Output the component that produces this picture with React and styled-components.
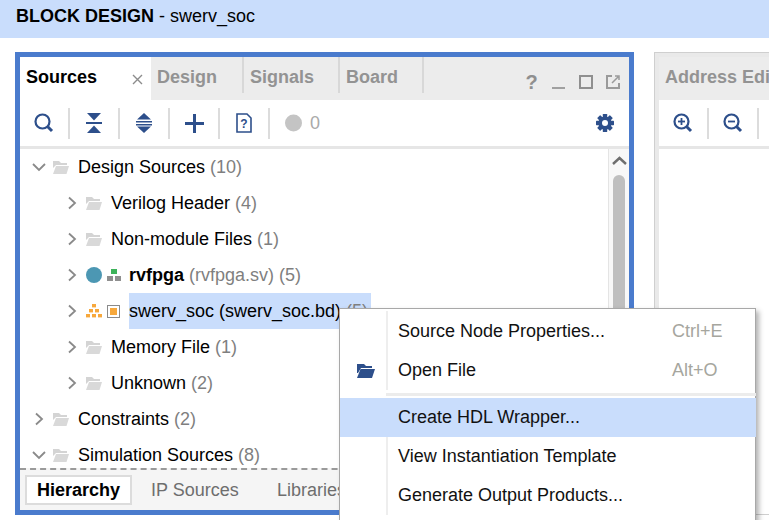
import styled, { createGlobalStyle } from "styled-components";

const GlobalStyle = createGlobalStyle`
    html, body {
        margin: 0;
        padding: 0;
        background: #fff;
    }

    body {
        font-family: "Liberation Sans", Arial, sans-serif;
        font-size: 18px;
        color: #000;
    }
`

const navy = "#2d4f8b";

const Page = styled.div`
    position: relative;
    width: 769px;
    height: 520px;
    overflow: hidden;
    background: #fff;
`

const TitleBar = styled.div`
    height: 38px;
    background: #c9ddfc;
    padding: 0 16px;
    line-height: 33px;
    box-sizing: border-box;

    b {
        font-weight: bold;
    }
`

const Workspace = styled.div`
    display: flex;
    gap: 20px;
    padding: 14px 0 0 15px;
`

const Panel = styled.div`
    flex: none;
    width: 619px;
    height: 463px;
    box-sizing: border-box;
    border: 5px solid #4a7bcd;
    display: flex;
    flex-direction: column;
`

const SidePanel = styled.div`
    flex: 1;
    min-width: 0;
    height: 463px;
    box-sizing: border-box;
    border: 1px solid #cfcfcf;
    border-right: 0;
    padding: 4px 0 0 4px;
    background: #e9e9e9;
    display: flex;
    flex-direction: column;
    overflow: hidden;
`

const SideBody = styled.div`
    flex: 1;
    background: #fff;
`

const TabStrip = styled.div`
    flex: none;
    height: 43px;
    background: #ececec;
    display: flex;
    align-items: stretch;
`

const Tab = styled.div`
    flex: none;
    box-sizing: border-box;
    width: ${(p) => p.$w}px;
    padding: 10px 0 0 6px;
    font-weight: bold;
    line-height: 20px;
    color: ${(p) => (p.$active ? "#000" : "#939393")};
    background: ${(p) => (p.$active ? "#fff" : "transparent")};
    position: relative;
    white-space: nowrap;
    overflow: hidden;
    border-right: ${(p) => (p.$divider ? "2px solid #d8d8d8" : "0")};
    margin-bottom: ${(p) => (p.$divider ? "7px" : "0")};
`

const CloseMark = styled.svg`
    position: absolute;
    right: 8px;
    top: 17px;
`

const WindowIcons = styled.div`
    margin-left: auto;
    display: flex;
    align-items: center;
    padding: 7px 3px 0 0;
`

const WindowIcon = styled.span`
    width: 27px;
    height: 20px;
    display: flex;
    align-items: center;
    justify-content: center;
    color: #8f8f8f;
    font-weight: bold;
    font-size: 20px;
`

const Toolbar = styled.div`
    flex: none;
    height: 49px;
    box-sizing: border-box;
    border-bottom: 3px solid #e6e6e6;
    background: #fff;
    display: flex;
    align-items: center;
`

const ToolCell = styled.div`
    flex: none;
    width: 50px;
    height: 31px;
    box-sizing: border-box;
    border-right: ${(p) => (p.$last ? "0" : "2px solid #dcdcdc")};
    padding-left: ${(p) => (p.$last ? "15px" : "0")};
    display: flex;
    align-items: center;
    justify-content: ${(p) => (p.$last ? "flex-start" : "center")};
    gap: 8px;
    color: #a9a9a9;
    font-size: 18px;
`

const GearSlot = styled.div`
    margin-left: auto;
    margin-right: 15px;
    display: flex;
`

const TreeArea = styled.div`
    flex: 1;
    min-height: 0;
    display: flex;
    overflow: hidden;
`

const Tree = styled.div`
    flex: 1;
    min-width: 0;
    overflow: hidden;
`

const Row = styled.div`
    height: 36px;
    display: flex;
    align-items: center;
    padding-left: ${(p) => 12 + p.$level * 33}px;
    white-space: nowrap;
`

const Chevron = styled.svg`
    flex: none;
    width: 14px;
    height: 14px;
`

const IconSlot = styled.span`
    flex: none;
    display: flex;
    align-items: center;
    width: ${(p) => p.$w}px;
    margin-left: ${(p) => p.$ml ?? 0}px;
`

const Label = styled.span`
    height: 36px;
    line-height: 36px;
    flex: ${(p) => (p.$selected ? "none" : "0 1 auto")};
    width: ${(p) => (p.$selected ? "242px" : "auto")};
    box-sizing: border-box;
    background: ${(p) => (p.$selected ? "#c9ddfc" : "transparent")};
    font-weight: ${(p) => (p.$bold ? "bold" : "normal")};
`

const Muted = styled.span`
    color: #7f7f7f;
    font-weight: normal;
`

const Scrollbar = styled.div`
    flex: none;
    width: 21px;
    background: #f8f8f8;
    border-left: 1px solid #e4e4e4;
    box-sizing: border-box;
    display: flex;
    flex-direction: column;
    align-items: center;
`

const ScrollUp = styled.svg`
    flex: none;
    margin-top: 7px;
    margin-bottom: 10px;
`

const ScrollThumb = styled.div`
    width: 12px;
    height: 220px;
    border-radius: 6px 6px 0 0;
    background: #bfbfbf;
`

const BottomTabs = styled.div`
    flex: none;
    height: 42px;
    box-sizing: border-box;
    border-top: 2px dashed #9a9a9a;
    background: #f5f5f5;
    display: flex;
    align-items: center;
    padding-left: 5px;
    white-space: nowrap;
    overflow: hidden;
`

const SubTab = styled.div`
    flex: none;
    box-sizing: border-box;
    width: ${(p) => p.$w}px;
    height: 30px;
    padding-left: ${(p) => (p.$active ? "10px" : "19px")};
    font-weight: ${(p) => (p.$active ? "bold" : "normal")};
    color: ${(p) => (p.$active ? "#000" : "#6e6e6e")};
    background: ${(p) => (p.$active ? "#fff" : "transparent")};
    border: ${(p) => (p.$active ? "2px solid #dcdcdc" : "0")};
    line-height: ${(p) => (p.$active ? "26px" : "30px")};
`

const Menu = styled.div`
    position: absolute;
    left: 339px;
    top: 308px;
    width: 417px;
    height: 230px;
    box-sizing: border-box;
    background: #fff;
    border: 1px solid #a8a8a8;
    border-width: 1px 1px 0 1px;
    box-shadow: 3px 3px 5px rgba(0, 0, 0, 0.3);
    padding-top: 2px;
`

const MenuDivider = styled.div`
    height: 3px;
    margin: 4px -1px 2px 46px;
    background: #ececec;
`

const MenuItem = styled.div`
    height: 39px;
    display: grid;
    grid-template-columns: 46px 1fr 84px;
    align-items: stretch;
    background: ${(p) => (p.$hover ? "#c9ddfc" : "transparent")};
    margin: 0 -1px 0 0;
    line-height: 40px;

    ${MenuDivider} ~ & {
        line-height: 38px;
    }
`

const MenuIcon = styled.div`
    display: flex;
    align-items: center;
    justify-content: center;
    padding-left: 5px;
`

const MenuLabel = styled.div`
    border-left: ${(p) => (p.$hover ? "2px solid transparent" : "2px solid #eeeeee")};
    padding-left: 10px;
    color: #111;
`

const MenuKey = styled.div`
    color: #a6a69e;
`

const Folder = () => (
    <svg width="18" height="15" viewBox="0 0 18 15">
        <path d="M1 1h6l2 2h6v2H4L1 8z" fill="#d4d4d4" />
        <path d="M1 14L4 6h13l-2.5 8z" fill="#d9d9d9" />
    </svg>
);

const ChevronRight = () => (
    <Chevron viewBox="0 0 14 14">
        <path d="M4 1.5L10 7l-6 5.5" fill="none" stroke="#8a8a8a" strokeWidth="1.8" />
    </Chevron>
);

const ChevronDown = () => (
    <Chevron viewBox="0 0 14 14">
        <path d="M1 4l6 6 6-6" fill="none" stroke="#8a8a8a" strokeWidth="1.8" />
    </Chevron>
);

const SearchIcon = ({ sign }) => (
    <svg width="20" height="20" viewBox="0 0 20 20">
        <circle cx="8.5" cy="8.5" r="7" fill="none" stroke={navy} strokeWidth="2.2" />
        <path d="M13.5 13.5l4.5 4.5" stroke={navy} strokeWidth="3" />
        {sign && <path d="M5 8.5h7" stroke={navy} strokeWidth="1.8" />}
        {sign === "plus" && <path d="M8.5 5v7" stroke={navy} strokeWidth="1.8" />}
    </svg>
);

const CollapseIcon = () => (
    <svg width="16" height="20" viewBox="0 0 16 20">
        <path d="M1 0h14l-7 7.5z" fill={navy} />
        <path d="M0 9h16v2H0z" fill={navy} />
        <path d="M1 20h14l-7-7.5z" fill={navy} />
    </svg>
);

const ExpandIcon = () => (
    <svg width="16" height="20" viewBox="0 0 16 20">
        <path d="M8 0l7 6.5H1z" fill={navy} />
        <path d="M0 8h16v1.6H0zM0 11h16v1.6H0z" fill={navy} />
        <path d="M8 20l7-6.5H1z" fill={navy} />
    </svg>
);

const PlusIcon = () => (
    <svg width="19" height="19" viewBox="0 0 19 19">
        <path d="M8 0h3v8h8v3h-8v8H8v-8H0V8h8z" fill={navy} />
    </svg>
);

const DocIcon = () => (
    <svg width="16" height="20" viewBox="0 0 16 20">
        <path d="M1 1h10l4 4v14H1z" fill="#fff" stroke={navy} strokeWidth="1.6" />
        <text x="8" y="15" textAnchor="middle" fontSize="12" fontWeight="bold" fill={navy} fontFamily="Liberation Sans">?</text>
    </svg>
);

const GearIcon = () => (
    <svg width="18" height="18" viewBox="0 0 18 18">
        {[0, 45, 90, 135].map((r) => (
            <rect key={r} x="6.8" y="0" width="4.4" height="18" rx="0.6" fill={navy} transform={`rotate(${r} 9 9)`} />
        ))}
        <circle cx="9" cy="9" r="6.6" fill={navy} />
        <circle cx="9" cy="9" r="3" fill="#fff" />
    </svg>
);

const GrayDot = () => (
    <svg width="18" height="18" viewBox="0 0 18 18">
        <circle cx="9" cy="9" r="9" fill="#c4c4c4" />
    </svg>
);

const ModuleIcon = () => (
    <svg width="14" height="12" viewBox="0 0 14 12">
        <rect x="4" y="0" width="6" height="5" fill="#3db35a" />
        <rect x="0" y="7" width="6" height="5" fill="#8f8f8f" />
        <rect x="8" y="7" width="6" height="5" fill="#8f8f8f" />
    </svg>
);

const PyramidIcon = () => (
    <svg width="16" height="14" viewBox="0 0 16 14">
        <rect x="6" y="0" width="4" height="3.4" fill="#f7a83c" />
        <rect x="3" y="5" width="4" height="3.4" fill="#f7a83c" />
        <rect x="9" y="5" width="4" height="3.4" fill="#f7a83c" />
        <rect x="0" y="10" width="4" height="3.4" fill="#f7a83c" />
        <rect x="6" y="10" width="4" height="3.4" fill="#f7a83c" />
        <rect x="12" y="10" width="4" height="3.4" fill="#f7a83c" />
    </svg>
);

const BlockIcon = () => (
    <svg width="13" height="13" viewBox="0 0 13 13">
        <rect x="0.5" y="0.5" width="12" height="12" fill="#fff" stroke="#8a8a8a" />
        <rect x="3" y="3" width="7" height="7" fill="#f7a83c" />
    </svg>
);

const TreeRow = ({ level = 0, open, icons, children, selected, bold }) => (
    <Row $level={level}>
        {open ? <ChevronDown /> : <ChevronRight />}
        {icons || (
            <IconSlot $w={26} $ml={6}>
                <Folder />
            </IconSlot>
        )}
        <Label $selected={selected} $bold={bold}>
            {children}
        </Label>
    </Row>
);

const App = () => {
    return (
        <Page>
            <GlobalStyle />
            <TitleBar>
                <b>BLOCK DESIGN</b> - swerv_soc
            </TitleBar>
            <Workspace>
                <Panel>
                    <TabStrip>
                        <Tab $active $w={131}>
                            Sources
                            <CloseMark width="11" height="11" viewBox="0 0 11 11">
                                <path d="M1 1l9 9M10 1l-9 9" stroke="#8c8c8c" strokeWidth="1.4" />
                            </CloseMark>
                        </Tab>
                        <Tab $w={93} $divider>Design</Tab>
                        <Tab $w={96} $divider>Signals</Tab>
                        <Tab $w={84} $divider>Board</Tab>
                        <WindowIcons>
                            <WindowIcon>?</WindowIcon>
                            <WindowIcon>
                                <svg width="14" height="14" viewBox="0 0 14 14">
                                    <path d="M0 12h13v2H0z" fill="#a0a0a0" />
                                </svg>
                            </WindowIcon>
                            <WindowIcon>
                                <svg width="14" height="14" viewBox="0 0 14 14">
                                    <rect x="1" y="1" width="12" height="12" fill="none" stroke="#8f8f8f" strokeWidth="2" />
                                </svg>
                            </WindowIcon>
                            <WindowIcon>
                                <svg width="14" height="14" viewBox="0 0 14 14">
                                    <path d="M6 1H1v12h12V8" fill="none" stroke="#9a9a9a" strokeWidth="2" />
                                    <path d="M6 8l6-6M9 1h4v4" fill="none" stroke="#9a9a9a" strokeWidth="1.5" />
                                </svg>
                            </WindowIcon>
                        </WindowIcons>
                    </TabStrip>
                    <Toolbar>
                        <ToolCell><SearchIcon /></ToolCell>
                        <ToolCell><CollapseIcon /></ToolCell>
                        <ToolCell><ExpandIcon /></ToolCell>
                        <ToolCell><PlusIcon /></ToolCell>
                        <ToolCell><DocIcon /></ToolCell>
                        <ToolCell $last>
                            <GrayDot />
                            <span>0</span>
                        </ToolCell>
                        <GearSlot><GearIcon /></GearSlot>
                    </Toolbar>
                    <TreeArea>
                        <Tree>
                            <TreeRow open>Design Sources <Muted>(10)</Muted></TreeRow>
                            <TreeRow level={1}>Verilog Header <Muted>(4)</Muted></TreeRow>
                            <TreeRow level={1}>Non-module Files <Muted>(1)</Muted></TreeRow>
                            <TreeRow
                                level={1}
                                bold
                                icons={
                                    <>
                                        <IconSlot $w={21} $ml={7}>
                                            <svg width="16" height="16" viewBox="0 0 16 16">
                                                <circle cx="8" cy="8" r="8" fill="#4c97b3" />
                                            </svg>
                                        </IconSlot>
                                        <IconSlot $w={22}><ModuleIcon /></IconSlot>
                                    </>
                                }
                            >
                                rvfpga <Muted>(rvfpga.sv) (5)</Muted>
                            </TreeRow>
                            <TreeRow
                                level={1}
                                selected
                                icons={
                                    <>
                                        <IconSlot $w={21} $ml={7}><PyramidIcon /></IconSlot>
                                        <IconSlot $w={22}><BlockIcon /></IconSlot>
                                    </>
                                }
                            >
                                swerv_soc (swerv_soc.bd) <Muted>(5)</Muted>
                            </TreeRow>
                            <TreeRow level={1}>Memory File <Muted>(1)</Muted></TreeRow>
                            <TreeRow level={1}>Unknown <Muted>(2)</Muted></TreeRow>
                            <TreeRow>Constraints <Muted>(2)</Muted></TreeRow>
                            <TreeRow open>Simulation Sources <Muted>(8)</Muted></TreeRow>
                        </Tree>
                        <Scrollbar>
                            <ScrollUp width="15" height="9" viewBox="0 0 15 9">
                                <path d="M1 8l6.5-6 6.5 6" fill="none" stroke="#6f6f6f" strokeWidth="2.4" />
                            </ScrollUp>
                            <ScrollThumb />
                        </Scrollbar>
                    </TreeArea>
                    <BottomTabs>
                        <SubTab $active $w={107}>Hierarchy</SubTab>
                        <SubTab $w={126}>IP Sources</SubTab>
                        <SubTab $w={90}>Libraries</SubTab>
                    </BottomTabs>
                </Panel>
                <SidePanel>
                    <TabStrip>
                        <Tab $w={130}>Address Editor</Tab>
                    </TabStrip>
                    <Toolbar>
                        <ToolCell><SearchIcon sign="plus" /></ToolCell>
                        <ToolCell><SearchIcon sign="minus" /></ToolCell>
                    </Toolbar>
                    <SideBody />
                </SidePanel>
            </Workspace>
            <Menu>
                <MenuItem>
                    <MenuIcon />
                    <MenuLabel>Source Node Properties...</MenuLabel>
                    <MenuKey>Ctrl+E</MenuKey>
                </MenuItem>
                <MenuItem>
                    <MenuIcon>
                        <svg width="18" height="15" viewBox="0 0 18 15">
                            <path d="M0 1h7l2 2h6v2H4L1 10H0z" fill="#2d4f8b" />
                            <path d="M0 15L3.5 6H18l-3 9z" fill="#2d4f8b" />
                        </svg>
                    </MenuIcon>
                    <MenuLabel>Open File</MenuLabel>
                    <MenuKey>Alt+O</MenuKey>
                </MenuItem>
                <MenuDivider />
                <MenuItem $hover>
                    <MenuIcon />
                    <MenuLabel $hover>Create HDL Wrapper...</MenuLabel>
                    <MenuKey />
                </MenuItem>
                <MenuItem>
                    <MenuIcon />
                    <MenuLabel>View Instantiation Template</MenuLabel>
                    <MenuKey />
                </MenuItem>
                <MenuItem>
                    <MenuIcon />
                    <MenuLabel>Generate Output Products...</MenuLabel>
                    <MenuKey />
                </MenuItem>
            </Menu>
        </Page>
    );
}

export default App;
